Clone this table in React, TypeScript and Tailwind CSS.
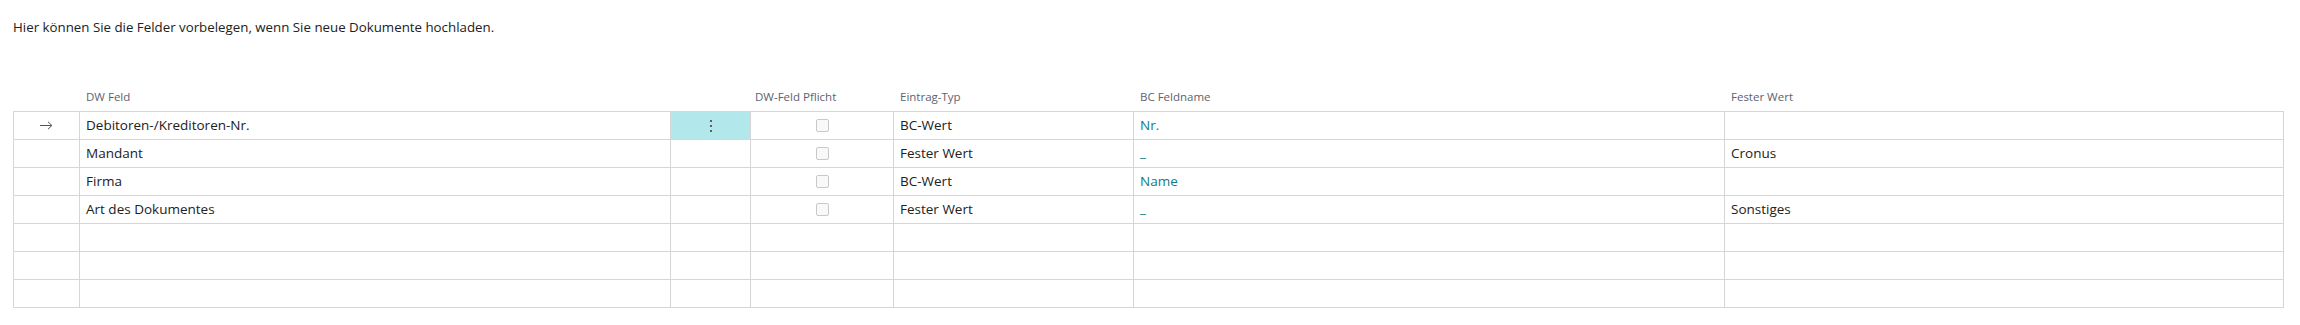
import React from 'react';

interface Row {
  feld: string;
  typ: string;
  bcFeld: string;
  wert: string;
}

const rows: Row[] = [
  { feld: 'Debitoren-/Kreditoren-Nr.', typ: 'BC-Wert', bcFeld: 'Nr.', wert: '' },
  { feld: 'Mandant', typ: 'Fester Wert', bcFeld: '_', wert: 'Cronus' },
  { feld: 'Firma', typ: 'BC-Wert', bcFeld: 'Name', wert: '' },
  { feld: 'Art des Dokumentes', typ: 'Fester Wert', bcFeld: '_', wert: 'Sonstiges' },
  { feld: '', typ: '', bcFeld: '', wert: '' },
  { feld: '', typ: '', bcFeld: '', wert: '' },
  { feld: '', typ: '', bcFeld: '', wert: '' },
];

const GRID = 'grid grid-cols-[66px_591px_80px_143px_240px_591px_559px]';
const CELL = 'h-[28px] border-r border-b border-[#d6d6d6] flex items-center px-[6px] whitespace-nowrap overflow-hidden';

function Arrow() {
  return (
    <svg width="13" height="9" viewBox="0 0 13 9" fill="none" stroke="#555" strokeWidth="1">
      <path d="M0 4.5h12M8 0.8l3.9 3.7L8 8.2" />
    </svg>
  );
}

function Dots() {
  return (
    <svg width="4" height="14" viewBox="0 0 4 14" fill="#444">
      <circle cx="2" cy="2" r="1.1" />
      <circle cx="2" cy="7" r="1.1" />
      <circle cx="2" cy="12" r="1.1" />
    </svg>
  );
}

function Checkbox() {
  return <div className="w-[13px] h-[13px] rounded-[2px] border border-[#c9c9c9] bg-[#f9f9f9]" />;
}

export default function App() {
  return (
    <div className="w-[2300px] h-[325px] bg-white text-[#212121] font-['Open_Sans',sans-serif]">
      <div className="pt-[17px] pl-[13px] text-[13.3px] leading-[20px]">
        Hier können Sie die Felder vorbelegen, wenn Sie neue Dokumente hochladen.
      </div>

      <div className="ml-[13px] mt-[46px]">
        {/* column headers */}
        <div className={`${GRID} pl-px text-[11.5px] text-[#5c6370]`}>
          <div className="h-[28px]" />
          <div className="h-[28px] flex items-center px-[6px]">DW Feld</div>
          <div className="h-[28px]" />
          <div className="h-[28px] flex items-center px-[4px]">DW-Feld Pflicht</div>
          <div className="h-[28px] flex items-center px-[6px]">Eintrag-Typ</div>
          <div className="h-[28px] flex items-center px-[6px]">BC Feldname</div>
          <div className="h-[28px] flex items-center px-[6px]">Fester Wert</div>
        </div>

        {/* rows */}
        <div className={`${GRID} w-fit border-l border-t border-[#d6d6d6] text-[13.5px]`}>
          {rows.map((r, i) => (
            <React.Fragment key={i}>
              <div className={`${CELL} justify-center`}>{i === 0 && <Arrow />}</div>
              <div className={CELL}>{r.feld}</div>
              <div className={`${CELL} justify-center ${i === 0 ? 'bg-[#b2e7ec]' : ''}`}>
                {i === 0 && <Dots />}
              </div>
              <div className={`${CELL} justify-center`}>{r.feld && <Checkbox />}</div>
              <div className={CELL}>{r.typ}</div>
              <div className={`${CELL} text-[#0f7b83] ${r.bcFeld === '_' ? 'items-end pb-[5px]' : ''}`}>
                {r.bcFeld}
              </div>
              <div className={CELL}>{r.wert}</div>
            </React.Fragment>
          ))}
        </div>
      </div>
    </div>
  );
}
